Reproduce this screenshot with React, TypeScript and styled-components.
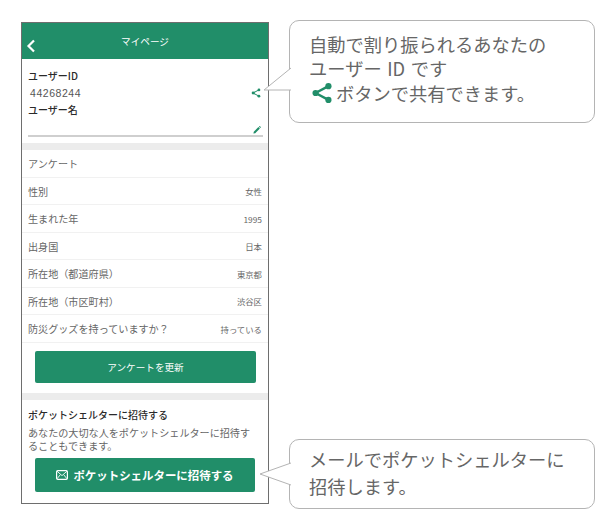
import React from "react";
import styled, { createGlobalStyle } from "styled-components";

const Global = createGlobalStyle`
  html, body { margin: 0; padding: 0; background: #fff; }
  body { font-family: "Noto Sans CJK JP", "Noto Sans", sans-serif; }
`;

const Page = styled.div`
  width: 610px;
  height: 519px;
  display: flex;
  align-items: flex-start;
  overflow: hidden;
`;

const Phone = styled.div`
  box-sizing: border-box;
  width: 248px;
  height: 482px;
  margin: 22px 0 0 21px;
  border: 1px solid #6e6e6e;
  background: #fff;
  display: flex;
  flex-direction: column;
  overflow: hidden;
`;

const Header = styled.header`
  flex: none;
  height: 36px;
  background: #218e69;
  display: flex;
  align-items: center;
  justify-content: center;
  position: relative;
  color: #fff;
  font-size: 9.6px;
  font-weight: 400;
`;

const Back = styled.svg`
  position: absolute;
  left: 4px;
  top: 16px;
  width: 10px;
  height: 14px;
`;

const UserBlock = styled.section`
  flex: none;
  box-sizing: border-box;
  height: 84px;
  padding: 8px 5px 0 6px;
`;

const Label = styled.div`
  font-size: 10px;
  line-height: 17px;
  font-weight: 500;
  color: #2a2a2a;
`;

const IdRow = styled.div`
  display: flex;
  align-items: center;
  justify-content: space-between;
  height: 17px;
  padding: 0 2px 0 2px;
  font-family: "Liberation Sans", sans-serif;
  font-size: 10.5px;
  letter-spacing: 0.55px;
  color: #555;
`;

const NameField = styled.div`
  box-sizing: border-box;
  height: 19px;
  display: flex;
  align-items: flex-end;
  justify-content: flex-end;
  padding: 0 2px 1px 0;
  border-bottom: 2px solid #cfcfcf;
`;

const Divider = styled.div`
  flex: none;
  height: 7px;
  background: #ececec;
`;

const Row = styled.div`
  flex: none;
  box-sizing: border-box;
  height: 27.5px;
  padding: 1px 6px 0;
  display: flex;
  align-items: center;
  justify-content: space-between;
  border-bottom: 1px solid #f1f1f1;
`;

const RowLabel = styled.span`
  font-size: 10.1px;
  color: #666;
  white-space: nowrap;
`;

const RowValue = styled.span`
  font-size: 8.4px;
  color: #666;
  white-space: nowrap;
`;

const ButtonWrap = styled.div`
  flex: none;
  padding: 8.5px 12px 9.5px 13px;
  display: flex;
`;

const GreenButton = styled.button<{ $h: number; $strong?: boolean }>`
  flex: 1;
  height: ${(p) => p.$h}px;
  border: 0;
  border-radius: 2px;
  padding: 0;
  background: #218e69;
  color: #fff;
  font-family: inherit;
  font-size: ${(p) => (p.$strong ? "11.45px" : "9.6px")};
  font-weight: ${(p) => (p.$strong ? 700 : 400)};
  display: flex;
  align-items: center;
  justify-content: center;
  gap: 5px;
  white-space: nowrap;
`;

const Invite = styled.section`
  flex: none;
  padding: 7px 6px 0;
`;

const InviteTitle = styled.div`
  font-size: 10px;
  line-height: 15px;
  font-weight: 500;
  color: #2a2a2a;
`;

const InviteText = styled.p`
  margin: 4px 8px 0 0;
  font-size: 10.1px;
  line-height: 13px;
  color: #666;
`;

const InviteButtonWrap = styled.div`
  display: flex;
  padding: 6.5px 7px 0;
`;

const Callouts = styled.div`
  margin: 20px 0 0 20px;
  width: 306px;
  display: flex;
  flex-direction: column;
  gap: 316px;
`;

const Bubble = styled.div<{ $h: number; $pt: number; $lh: number }>`
  box-sizing: border-box;
  position: relative;
  width: 306px;
  height: ${(p) => p.$h}px;
  padding: ${(p) => p.$pt}px 18px 0 19px;
  border: 1px solid #b4b4b4;
  border-radius: 10px;
  background: #fff;
  color: #666;
  font-size: 18.25px;
  line-height: ${(p) => p.$lh}px;
  white-space: nowrap;
  word-spacing: 1.5px;
`;

const Tail = styled.svg<{ $top: number; $h: number; $w: number }>`
  position: absolute;
  left: ${(p) => -p.$w}px;
  top: ${(p) => p.$top}px;
  width: ${(p) => p.$w + 1}px;
  height: ${(p) => p.$h}px;
  overflow: visible;
`;

const BubbleLine = styled.div`
  display: flex;
  align-items: center;
`;

const ShareBig = styled.svg`
  width: 22px;
  height: 22px;
  margin: 0 3px 0 2px;
  flex: none;
`;

const ShareSmall = styled.svg`
  width: 10px;
  height: 10px;
  flex: none;
`;

const ShareBody = () => (
  <>
    <path d="M19 4.5 L5 12 L19 19.5" fill="none" stroke="#218e69" strokeWidth="2.6" />
    <circle cx="19" cy="4.5" r="3.4" fill="#218e69" />
    <circle cx="5" cy="12" r="3.4" fill="#218e69" />
    <circle cx="19" cy="19.5" r="3.4" fill="#218e69" />
  </>
);

const Pencil = () => (
  <svg width="8" height="8" viewBox="0 0 10 10">
    <path d="M0.5 9.5 L1 7.2 L6.8 1.4 L8.6 3.2 L2.8 9 Z" fill="#218e69" />
    <path d="M7.4 0.8 L8 0.3 Q8.4 0 8.8 0.3 L9.7 1.2 Q10 1.6 9.7 2 L9.2 2.6 Z" fill="#218e69" />
  </svg>
);

const Mail = () => (
  <svg width="12" height="10" viewBox="0 0 12 10">
    <rect x="0.6" y="0.6" width="10.8" height="8.8" rx="1.2" fill="none" stroke="#fff" strokeWidth="1.2" />
    <path d="M1 1.2 L6 5.6 L11 1.2 M1 8.8 L4.4 4.6 M11 8.8 L7.6 4.6" fill="none" stroke="#fff" strokeWidth="0.9" />
  </svg>
);

const rows: [string, string][] = [
  ["性別", "女性"],
  ["生まれた年", "1995"],
  ["出身国", "日本"],
  ["所在地（都道府県）", "東京都"],
  ["所在地（市区町村）", "渋谷区"],
  ["防災グッズを持っていますか？", "持っている"],
];

export default function App() {
  return (
    <Page>
      <Global />
      <Phone>
        <Header>
          <Back viewBox="0 0 10 14">
            <path d="M8 1.5 L2.5 7 L8 12.5" fill="none" stroke="#fff" strokeWidth="2.2" />
          </Back>
          マイページ
        </Header>
        <UserBlock>
          <Label>ユーザーID</Label>
          <IdRow>
            44268244
            <ShareSmall viewBox="0 0 24 24">
              <ShareBody />
            </ShareSmall>
          </IdRow>
          <Label>ユーザー名</Label>
          <NameField>
            <Pencil />
          </NameField>
        </UserBlock>
        <Divider />
        <Row>
          <RowLabel>アンケート</RowLabel>
        </Row>
        {rows.map(([k, v]) => (
          <Row key={k}>
            <RowLabel>{k}</RowLabel>
            <RowValue>{v}</RowValue>
          </Row>
        ))}
        <ButtonWrap>
          <GreenButton $h={32}>アンケートを更新</GreenButton>
        </ButtonWrap>
        <Divider />
        <Invite>
          <InviteTitle>ポケットシェルターに招待する</InviteTitle>
          <InviteText>あなたの大切な人をポケットシェルターに招待することもできます。</InviteText>
          <InviteButtonWrap>
            <GreenButton $h={34} $strong>
              <Mail />
              ポケットシェルターに招待する
            </GreenButton>
          </InviteButtonWrap>
        </Invite>
      </Phone>
      <Callouts>
        <Bubble $h={103} $pt={11} $lh={24.4}>
          <Tail $top={47} $h={23} $w={27} viewBox="0 0 28 23">
            <path d="M28 0 L1 22 L28 22" fill="#fff" stroke="#b4b4b4" strokeWidth="1" />
          </Tail>
          自動で割り振られるあなたの
          <br />
          ユーザー ID です
          <BubbleLine>
            <ShareBig viewBox="0 0 24 24">
              <ShareBody />
            </ShareBig>
            ボタンで共有できます。
          </BubbleLine>
        </Bubble>
        <Bubble $h={70} $pt={6} $lh={26.5}>
          <Tail $top={23} $h={22} $w={31} viewBox="0 0 32 22">
            <path d="M32 0 L1 11 L32 22" fill="#fff" stroke="#b4b4b4" strokeWidth="1" />
          </Tail>
          メールでポケットシェルターに
          <br />
          招待します。
        </Bubble>
      </Callouts>
    </Page>
  );
}
